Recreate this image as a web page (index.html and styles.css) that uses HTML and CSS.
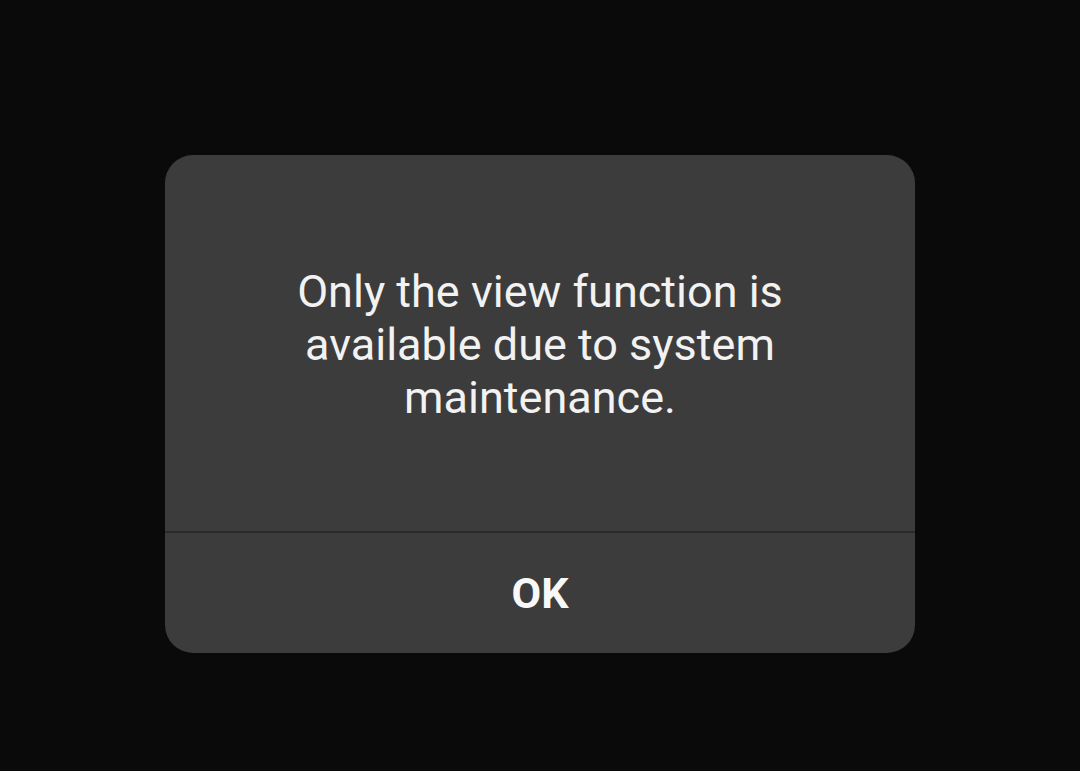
FILE: index.html
```html
<!DOCTYPE html>
<html>
<head>
<meta charset="utf-8">
<link rel="stylesheet" href="styles.css">
</head>
<body>
<div class="screen">
  <div class="dialog">
    <div class="message">Only the view function is<br>available due to system<br>maintenance.</div>
    <div class="divider"></div>
    <div class="actions"><span class="ok">OK</span></div>
  </div>
</div>
</body>
</html>
```
FILE: styles.css
```css
html, body {
  margin: 0;
  padding: 0;
  background: #0a0a0a;
}
.screen {
  width: 1080px;
  height: 771px;
  display: flex;
  justify-content: center;
  padding-top: 155px;
  box-sizing: border-box;
}
.dialog {
  width: 750px;
  height: 498px;
  background: #3c3c3c;
  border-radius: 28px;
  display: flex;
  flex-direction: column;
  font-family: Roboto, "Noto Sans", sans-serif;
  color: #f2f2f2;
}
.message {
  height: 376px;
  display: flex;
  align-items: center;
  justify-content: center;
  text-align: center;
  font-size: 45px;
  line-height: 53px;
  padding-top: 2px;
  box-sizing: border-box;
}
.divider {
  height: 2px;
  background: #292929;
}
.actions {
  flex: 1;
  display: flex;
  align-items: center;
  justify-content: center;
}
.ok {
  font-size: 43px;
  font-weight: bold;
  color: #f8f8f8;
}
```
